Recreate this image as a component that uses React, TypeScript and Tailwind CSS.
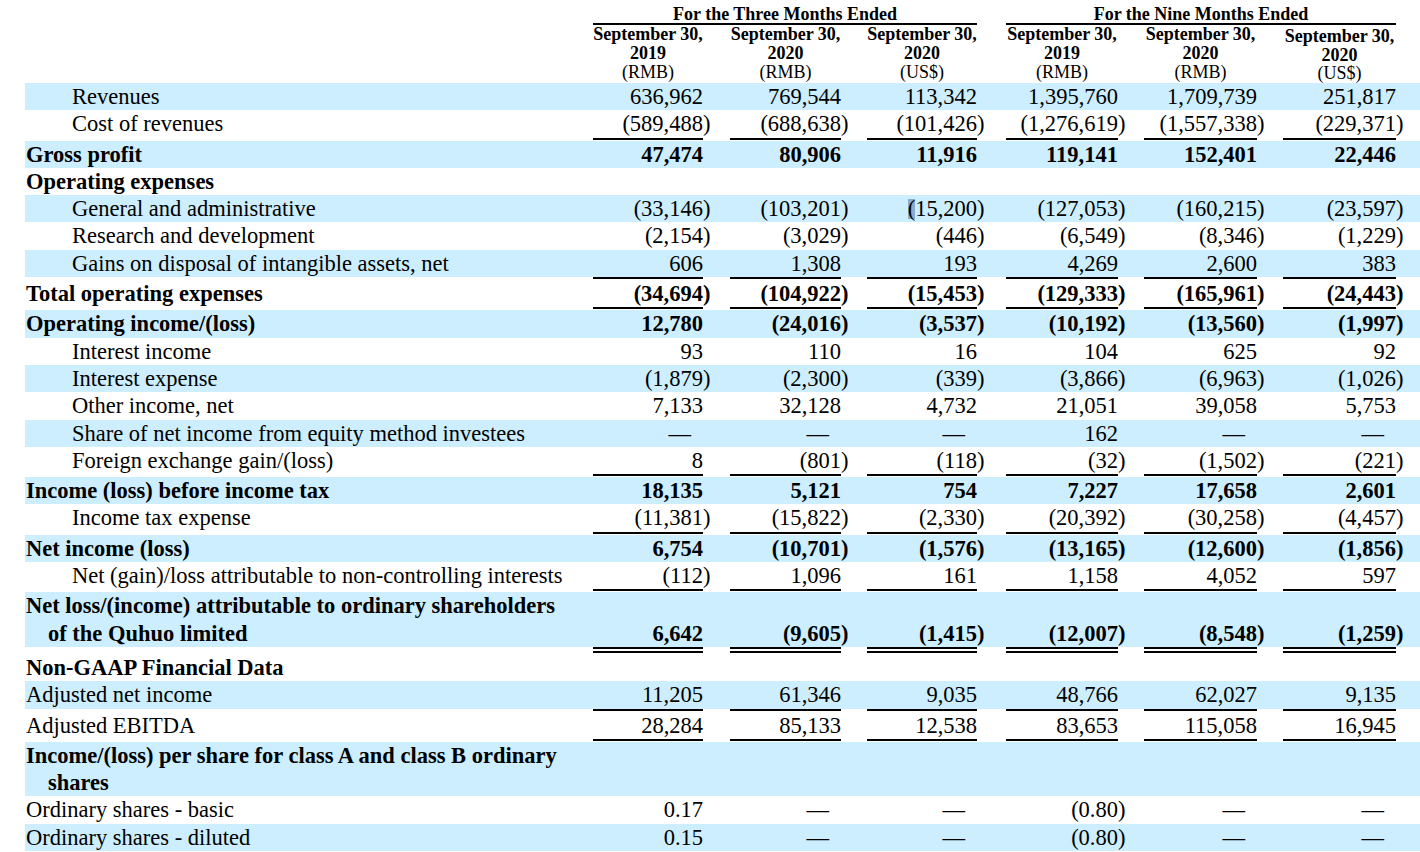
import type { ReactNode } from "react";

type Cell = string | ReactNode;

// value column widths + the gap (paren space) before each column
const COL = [
  "w-[110px]",
  "ml-[27px] w-[111px]",
  "ml-[26px] w-[110px]",
  "ml-[29px] w-[112px]",
  "ml-[26px] w-[113px]",
  "ml-[26px] w-[113px]",
];

const HEADS = [
  { year: "2019", cur: "(RMB)" },
  { year: "2020", cur: "(RMB)" },
  { year: "2020", cur: "(US$)" },
  { year: "2019", cur: "(RMB)" },
  { year: "2020", cur: "(RMB)" },
  { year: "2020", cur: "(US$)" },
];

function Value({ v }: { v: Cell }) {
  if (typeof v !== "string") return <>{v}</>;
  if (v === "—") return <span className="pr-[12px]">—</span>;
  if (v.startsWith("(")) {
    return (
      <>
        {v.slice(0, -1)}
        <span className="inline-block w-0 text-left">)</span>
      </>
    );
  }
  return <>{v}</>;
}

type RowProps = {
  label: string;
  cont?: string;
  values?: Cell[];
  bold?: boolean;
  indent?: boolean;
  blue?: boolean;
};

function Row({ label, cont, values, bold, indent, blue }: RowProps) {
  return (
    <div
      className={`flex leading-[27.3px] ${cont ? "h-[54.6px]" : "h-[27.3px]"} ${
        blue ? "bg-[#cceeff]" : ""
      } ${bold ? "font-bold" : ""}`}
    >
      <div className={`w-[568px] whitespace-nowrap ${indent ? "pl-[47px]" : "pl-[1px]"}`}>
        <div>{label}</div>
        {cont && <div className="pl-[22px]">{cont}</div>}
      </div>
      {values &&
        values.map((v, i) => (
          <div key={i} className={`${COL[i]} self-end whitespace-nowrap text-right`}>
            <Value v={v} />
          </div>
        ))}
    </div>
  );
}

function Rule({ double }: { double?: boolean }) {
  return (
    <div className={`flex ${double ? "h-[7px]" : "h-[3px]"}`}>
      <div className="w-[568px]" />
      {COL.map((c, i) => (
        <div key={i} className={c}>
          <div className={double ? "h-[6px] border-y-2 border-black" : "h-[2px] bg-black"} />
        </div>
      ))}
    </div>
  );
}

export default function App() {
  return (
    <div className="h-[852px] w-[1420px] overflow-hidden bg-white pl-[25px] text-[22.5px] text-black font-['Liberation_Serif','Times_New_Roman',serif]">
      {/* header */}
      <div className="flex h-[83px] text-[18px]">
        <div className="w-[568px]" />
        <div className="flex flex-col">
          <div className="flex pt-[5px] font-bold leading-[18px]">
            <div className="w-[384px] border-b-2 border-black text-center">For the Three Months Ended</div>
            <div className="ml-[29px] w-[390px] border-b-2 border-black text-center">For the Nine Months Ended</div>
          </div>
          <div className="flex leading-[19px]">
            {HEADS.map((h, i) => (
              <div key={i} className={`${COL[i]} whitespace-nowrap text-center`}>
                <div className={`font-bold ${i === 5 ? "pt-[2px]" : ""}`}>September 30,</div>
                <div className={`font-bold ${i === 5 ? "leading-[18px]" : ""}`}>{h.year}</div>
                <div className={i === 5 ? "leading-[18px]" : ""}>{h.cur}</div>
              </div>
            ))}
          </div>
        </div>
      </div>

      <Row blue indent label="Revenues" values={["636,962", "769,544", "113,342", "1,395,760", "1,709,739", "251,817"]} />
      <Row indent label="Cost of revenues" values={["(589,488)", "(688,638)", "(101,426)", "(1,276,619)", "(1,557,338)", "(229,371)"]} />
      <Rule />
      <Row blue bold label="Gross profit" values={["47,474", "80,906", "11,916", "119,141", "152,401", "22,446"]} />
      <Row bold label="Operating expenses" />
      <Row
        blue
        indent
        label="General and administrative"
        values={[
          "(33,146)",
          "(103,201)",
          <>
            <span className="inline-block h-[20px] bg-[#88acd2] leading-[20px]">(</span>15,200
            <span className="inline-block w-0 text-left">)</span>
          </>,
          "(127,053)",
          "(160,215)",
          "(23,597)",
        ]}
      />
      <Row indent label="Research and development" values={["(2,154)", "(3,029)", "(446)", "(6,549)", "(8,346)", "(1,229)"]} />
      <Row blue indent label="Gains on disposal of intangible assets, net" values={["606", "1,308", "193", "4,269", "2,600", "383"]} />
      <Rule />
      <Row bold label="Total operating expenses" values={["(34,694)", "(104,922)", "(15,453)", "(129,333)", "(165,961)", "(24,443)"]} />
      <Rule />
      <Row blue bold label="Operating income/(loss)" values={["12,780", "(24,016)", "(3,537)", "(10,192)", "(13,560)", "(1,997)"]} />
      <Row indent label="Interest income" values={["93", "110", "16", "104", "625", "92"]} />
      <Row blue indent label="Interest expense" values={["(1,879)", "(2,300)", "(339)", "(3,866)", "(6,963)", "(1,026)"]} />
      <Row indent label="Other income, net" values={["7,133", "32,128", "4,732", "21,051", "39,058", "5,753"]} />
      <Row blue indent label="Share of net income from equity method investees" values={["—", "—", "—", "162", "—", "—"]} />
      <Row indent label="Foreign exchange gain/(loss)" values={["8", "(801)", "(118)", "(32)", "(1,502)", "(221)"]} />
      <Rule />
      <Row blue bold label="Income (loss) before income tax" values={["18,135", "5,121", "754", "7,227", "17,658", "2,601"]} />
      <Row indent label="Income tax expense" values={["(11,381)", "(15,822)", "(2,330)", "(20,392)", "(30,258)", "(4,457)"]} />
      <Rule />
      <Row blue bold label="Net income (loss)" values={["6,754", "(10,701)", "(1,576)", "(13,165)", "(12,600)", "(1,856)"]} />
      <Row indent label="Net (gain)/loss attributable to non-controlling interests" values={["(112)", "1,096", "161", "1,158", "4,052", "597"]} />
      <Rule />
      <Row
        blue
        bold
        label="Net loss/(income) attributable to ordinary shareholders"
        cont="of the Quhuo limited"
        values={["6,642", "(9,605)", "(1,415)", "(12,007)", "(8,548)", "(1,259)"]}
      />
      <Rule double />
      <Row bold label="Non-GAAP Financial Data" />
      <Row blue label="Adjusted net income" values={["11,205", "61,346", "9,035", "48,766", "62,027", "9,135"]} />
      <Rule />
      <Row label="Adjusted EBITDA" values={["28,284", "85,133", "12,538", "83,653", "115,058", "16,945"]} />
      <Rule />
      <Row blue bold label="Income/(loss) per share for class A and class B ordinary" cont="shares" />
      <Row label="Ordinary shares - basic" values={["0.17", "—", "—", "(0.80)", "—", "—"]} />
      <Row blue label="Ordinary shares - diluted" values={["0.15", "—", "—", "(0.80)", "—", "—"]} />
    </div>
  );
}
